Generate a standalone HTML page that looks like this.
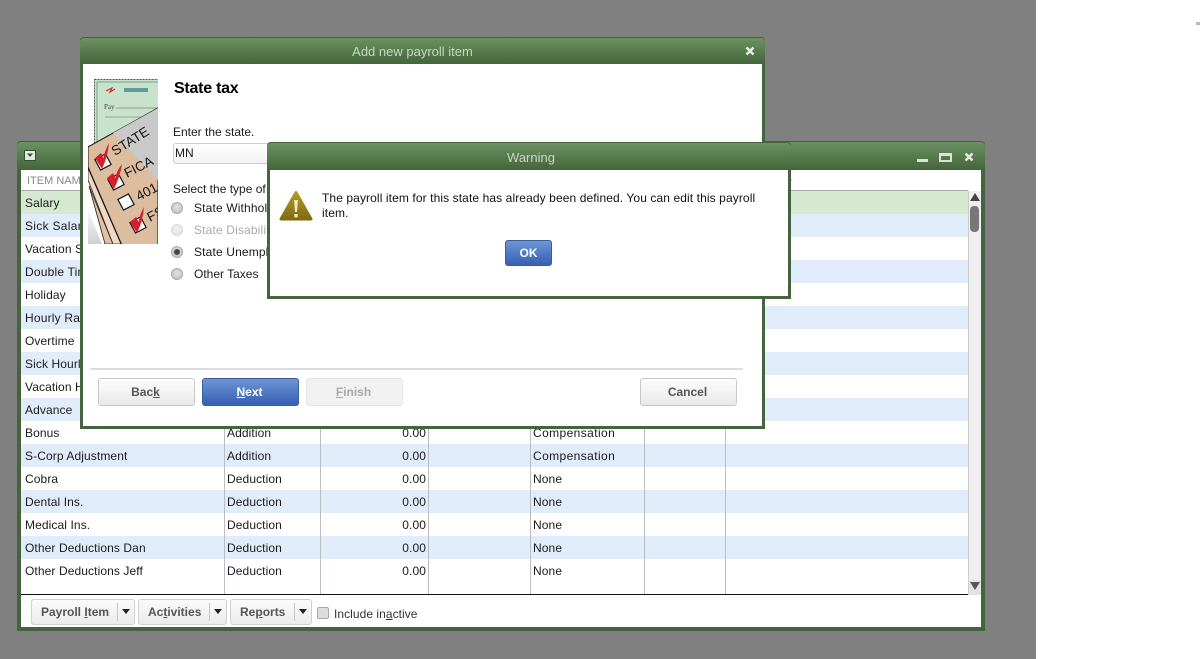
<!DOCTYPE html>
<html><head><meta charset="utf-8">
<style>
html,body{margin:0;padding:0;background:#fff;}
body{width:1202px;height:659px;position:relative;overflow:hidden;font-family:"Liberation Sans",Arial,sans-serif;font-size:12px;color:#1a1a1a;}
.a{position:absolute;}
.t{position:absolute;white-space:nowrap;line-height:14px;}
.win{position:absolute;background:#45633f;border-radius:4px 4px 0 0;box-sizing:border-box;}
.bar{position:absolute;left:0;right:0;top:0;background:linear-gradient(#6d9464,#43653b);border-radius:4px 4px 0 0;box-shadow:inset 0 1px 0 #45633f;}
.in{position:absolute;background:#fff;overflow:hidden;}
.title{position:absolute;color:#c8d5c5;font-size:13px;line-height:15px;white-space:nowrap;text-align:center;}
.row{position:absolute;left:0;width:947px;height:23px;letter-spacing:.1px;}
.row span{position:absolute;top:5px;line-height:14px;white-space:nowrap;}
.row .c{letter-spacing:.4px;}
.row .w{letter-spacing:.3px;}
.row .x{letter-spacing:.2px;}
.b{background:#e1ecfb;} .g{background:#d4e9d0;}
.btn{position:absolute;box-sizing:border-box;border:1px solid #c8c8c8;border-radius:3px;background:linear-gradient(#fdfdfd,#e9e9e9);color:#555;font-weight:bold;text-align:center;height:28px;line-height:26px;text-indent:-2px;}
.blue{border-color:#3a5f95;background:linear-gradient(#6e95d6,#3560b4);color:#fff;}
.dis{background:#f1f1f1;border-color:#e4e4e4;color:#aaa;}
u{text-decoration:underline;}
.radio{position:absolute;width:10px;height:10px;border-radius:50%;border:1px solid #aaa;background:radial-gradient(circle at 50% 40%,#e2e2e2,#bdbdbd);}
.v{position:absolute;top:21px;width:1px;height:403px;background:#b9bec5;}
.fb{position:absolute;top:429px;height:26px;box-sizing:border-box;border:1px solid #d0d0d0;border-radius:3px;background:linear-gradient(#fbfbfb,#ebebeb);color:#555;font-weight:bold;line-height:24px;}
.fb i{position:absolute;top:3px;bottom:3px;width:1px;background:#c8c8c8;}
.fb b{position:absolute;top:9px;width:0;height:0;border-left:4px solid transparent;border-right:4px solid transparent;border-top:5px solid #222;}
</style></head>
<body>
<div class="a" style="left:0;top:0;width:1036px;height:659px;background:#808080;"></div>
<div class="a" style="left:1196px;top:22px;width:4px;height:3px;background:#bbb;"></div>

<!-- back window -->
<div class="win" style="left:17px;top:141px;width:968px;height:490px;">
  <div class="bar" style="height:29px;"></div>
  <svg class="a" style="left:7px;top:9px;" width="13" height="12" viewBox="0 0 13 12"><rect x="0.5" y="0.5" width="11" height="10" fill="#dfe8dc" stroke="#34502f"/><path d="M3 3.500h6L6 7z" fill="#34502f"/></svg>
  <div class="a" style="left:900px;top:18px;width:11px;height:3px;background:#d9e3d6;"></div>
  <div class="a" style="left:922px;top:12px;width:13px;height:9px;box-sizing:border-box;border:2px solid #d9e3d6;border-top-width:3px;"></div>
  <svg class="a" style="left:947px;top:11px;" width="10" height="10" viewBox="0 0 10 10"><path d="M1.500 1.500l7 7M8.500 1.500l-7 7" stroke="#dfe8dc" stroke-width="2.600"/></svg>
  <div class="in" style="left:4px;top:29px;width:960px;height:457px;">
    <div class="t" style="left:6px;top:4px;font-size:11px;color:#888;">ITEM NAME</div>
    <div class="t" style="left:760px;top:4px;font-size:11px;color:#888;">ID</div>
    <div class="a" style="left:0;top:20px;width:947px;height:1px;background:#aaa;"></div>

    <div class="row g" style="top:21px;"><span style="left:4px;">Salary</span></div>
    <div class="row b" style="top:44px;"><span class="w" style="left:4px;">Sick Salary</span></div>
    <div class="row" style="top:67px;"><span style="left:4px;">Vacation Salary</span></div>
    <div class="row b" style="top:90px;"><span class="x" style="left:4px;">Double Time</span></div>
    <div class="row" style="top:113px;"><span style="left:4px;">Holiday</span></div>
    <div class="row b" style="top:136px;"><span class="x" style="left:4px;">Hourly Rate</span></div>
    <div class="row" style="top:159px;"><span style="left:4px;">Overtime</span></div>
    <div class="row b" style="top:182px;"><span style="left:4px;">Sick Hourly</span></div>
    <div class="row" style="top:205px;"><span style="left:4px;">Vacation Hourly</span></div>
    <div class="row b" style="top:228px;"><span style="left:4px;">Advance</span></div>
    <div class="row" style="top:251px;"><span style="left:4px;">Bonus</span><span style="left:206px;">Addition</span><span style="right:542px;">0.00</span><span class="c" style="left:512px;">Compensation</span></div>
    <div class="row b" style="top:274px;"><span style="left:4px;">S-Corp Adjustment</span><span style="left:206px;">Addition</span><span style="right:542px;">0.00</span><span class="c" style="left:512px;">Compensation</span></div>
    <div class="row" style="top:297px;"><span style="left:4px;">Cobra</span><span style="left:206px;">Deduction</span><span style="right:542px;">0.00</span><span style="left:512px;">None</span></div>
    <div class="row b" style="top:320px;"><span style="left:4px;">Dental Ins.</span><span style="left:206px;">Deduction</span><span style="right:542px;">0.00</span><span style="left:512px;">None</span></div>
    <div class="row" style="top:343px;"><span style="left:4px;">Medical Ins.</span><span style="left:206px;">Deduction</span><span style="right:542px;">0.00</span><span style="left:512px;">None</span></div>
    <div class="row b" style="top:366px;"><span style="left:4px;">Other Deductions Dan</span><span style="left:206px;">Deduction</span><span style="right:542px;">0.00</span><span style="left:512px;">None</span></div>
    <div class="row" style="top:389px;"><span style="left:4px;">Other Deductions Jeff</span><span style="left:206px;">Deduction</span><span style="right:542px;">0.00</span><span style="left:512px;">None</span></div>

    <div class="v" style="left:203px;"></div>
    <div class="v" style="left:299px;"></div>
    <div class="v" style="left:407px;"></div>
    <div class="v" style="left:509px;"></div>
    <div class="v" style="left:623px;"></div>
    <div class="v" style="left:704px;"></div>

    <div class="a" style="left:0;top:424px;width:947px;height:1px;background:#111;"></div>

    <!-- scrollbar -->
    <div class="a" style="left:947px;top:21px;width:13px;height:404px;background:#efefef;border-left:1px solid #ccc;box-sizing:border-box;"></div>
    <div class="a" style="left:949px;top:23px;width:0;height:0;border-left:5px solid transparent;border-right:5px solid transparent;border-bottom:8px solid #444;"></div>
    <div class="a" style="left:949px;top:36px;width:9px;height:26px;background:#777;border-radius:4px;"></div>
    <div class="a" style="left:948px;top:410px;width:12px;height:15px;background:#e3e3e3;"></div>
    <div class="a" style="left:949px;top:412px;width:0;height:0;border-left:5px solid transparent;border-right:5px solid transparent;border-top:8px solid #555;"></div>

    <!-- footer -->
    <div class="fb" style="left:10px;width:104px;"><span class="a" style="left:9px;">Payroll <u>I</u>tem</span><i style="left:85px;"></i><b style="left:90px;"></b></div>
    <div class="fb" style="left:117px;width:89px;"><span class="a" style="left:9px;">Ac<u>t</u>ivities</span><i style="left:70px;"></i><b style="left:75px;"></b></div>
    <div class="fb" style="left:209px;width:82px;"><span class="a" style="left:9px;">Re<u>p</u>orts</span><i style="left:63px;"></i><b style="left:68px;"></b></div>
    <div class="a" style="left:296px;top:437px;width:12px;height:12px;box-sizing:border-box;border:1px solid #aaa;border-radius:2px;background:#ddd;"></div>
    <div class="t" style="left:313px;top:437px;color:#333;letter-spacing:.05px;">Include in<u>a</u>ctive</div>
  </div>
</div>

<!-- wizard dialog -->
<div class="win" style="left:80px;top:37px;width:685px;height:392px;">
  <div class="bar" style="height:27px;"></div>
  <div class="title" style="left:0;width:665px;top:7px;">Add new payroll item</div>
  <svg class="a" style="left:665px;top:9px;" width="10" height="10" viewBox="0 0 10 10"><path d="M1.500 1.500l7 7M8.500 1.500l-7 7" stroke="#e6ece4" stroke-width="2.600"/></svg>
  <div class="in" style="left:3px;top:27px;width:679px;height:362px;">
    <!-- image; page coords translated -->
    <svg class="a" style="left:0;top:0;" width="80" height="190" viewBox="83 64 80 190">
      <defs><clipPath id="c"><rect x="88" y="78" width="70" height="166"/></clipPath>
      <linearGradient id="sh" x1="0" y1="0" x2="0" y2="1"><stop offset="0" stop-color="#fafafa"/><stop offset="1" stop-color="#d0d0d0"/></linearGradient></defs>
      <g clip-path="url(#c)">
        <rect x="94.500" y="79.500" width="70" height="70" fill="#c8e2cc" stroke="#44584a" stroke-dasharray="2 1"/>
        <rect x="97" y="82" width="70" height="60" fill="none" stroke="#7aa088" stroke-width="1"/>
        <path d="M106 91l6-3-2 4 5-3" stroke="#c33" fill="none" stroke-width="1.200"/>
        <rect x="124" y="88" width="24" height="4" fill="#5f9c9a"/>
        <text x="104" y="109" font-family="Liberation Serif,serif" font-size="7" fill="#444">Pay</text>
        <path d="M116 108h42" stroke="#999" stroke-width="1"/>
        <path d="M105 117h53" stroke="#8fae96" stroke-width="1"/>
        <path d="M88 210L102 244H88z" fill="url(#sh)"/>
        <path d="M89 186L105 244H113z" fill="#e0bfa5" stroke="#222" stroke-width=".8"/>
        <path d="M88 168V180L113 244H121z" fill="#f0d8c4" stroke="#222" stroke-width=".8"/>
        <path d="M88 147L158 108V250H124L88 167z" fill="#dcbd9f" stroke="#111" stroke-width="1"/>
        <path d="M113 133L158 108V180z" fill="#c9c9c9"/>
        <g font-family="Liberation Sans,Arial,sans-serif" font-size="13.500" fill="#111">
          <text transform="translate(115 156) rotate(-32)">STATE</text>
          <text transform="translate(127 178) rotate(-27)">FICA</text>
          <text transform="translate(139 201) rotate(-28)">401</text>
          <text transform="translate(150 222) rotate(-28)">FSA</text>
        </g>
        <g fill="#fff" stroke="#111" stroke-width="1.200">
          <rect x="-6" y="-6" width="12" height="12" transform="translate(103 162) rotate(-28)"/>
          <rect x="-6" y="-6" width="12" height="12" transform="translate(116 182) rotate(-28)"/>
          <rect x="-6" y="-6" width="12" height="12" transform="translate(126 202) rotate(-28)"/>
          <rect x="-6" y="-6" width="12" height="12" transform="translate(138 225) rotate(-28)"/>
        </g>
        <g fill="#d81e2a">
          <path d="M95 158L101 153L103.500 158Q105 150 109 143Q108 156 102 169z"/>
          <path d="M107 178L113 173L115.500 178Q117 170 122 164Q120 177 114 189z"/>
          <path d="M130 222L136 217L138.500 222Q140 214 144 207Q143 221 137 233z"/>
        </g>
      </g>
    </svg>
    <div class="t" style="left:91px;top:16px;font-size:16px;font-weight:bold;color:#000;line-height:18px;letter-spacing:-.25px;">State tax</div>
    <div class="t" style="left:90px;top:61px;">Enter the state.</div>
    <div class="a" style="left:90px;top:79px;width:200px;height:21px;box-sizing:border-box;border:1px solid #ccc;border-radius:3px;background:linear-gradient(#fff,#f2f2f2);"><span class="t" style="left:1px;top:2px;">MN</span></div>
    <div class="t" style="left:90px;top:118px;">Select the type of state tax</div>
    <div class="radio" style="left:88px;top:138px;"></div>
    <div class="t" style="left:111px;top:137px;letter-spacing:.15px;">State Withholding</div>
    <div class="radio" style="left:88px;top:160px;opacity:.45;"></div>
    <div class="t" style="left:111px;top:159px;color:#aaa;letter-spacing:.15px;">State Disability</div>
    <div class="radio" style="left:88px;top:182px;"></div>
    <div class="a" style="left:91px;top:185px;width:6px;height:6px;border-radius:50%;background:#444;"></div>
    <div class="t" style="left:111px;top:181px;letter-spacing:.15px;">State Unemployment</div>
    <div class="radio" style="left:88px;top:204px;"></div>
    <div class="t" style="left:111px;top:203px;">Other Taxes</div>
    <div class="a" style="left:7px;top:304px;width:653px;height:2px;background:#ddd;"></div>
    <div class="btn" style="left:15px;top:314px;width:97px;">Bac<u>k</u></div>
    <div class="btn blue" style="left:119px;top:314px;width:97px;"><u>N</u>ext</div>
    <div class="btn dis" style="left:223px;top:314px;width:97px;"><u>F</u>inish</div>
    <div class="btn" style="left:557px;top:314px;width:97px;">Cancel</div>
  </div>
</div>

<!-- warning -->
<div class="win" style="left:267px;top:142px;width:524px;height:157px;">
  <div class="bar" style="height:28px;"></div>
  <div class="title" style="left:0;width:528px;top:8px;">Warning</div>
  <div class="in" style="left:3px;top:28px;width:518px;height:126px;">
    <svg class="a" style="left:9px;top:20px;" width="34" height="33" viewBox="0 0 34 33">
      <defs><linearGradient id="w" gradientUnits="userSpaceOnUse" x1="0" y1="1" x2="0" y2="31"><stop offset="0" stop-color="#b39a24"/><stop offset="1" stop-color="#7d6a12"/></linearGradient></defs>
      <path d="M17 2.500L32 29H2z" fill="url(#w)" stroke="url(#w)" stroke-width="3" stroke-linejoin="round"/>
      <path d="M15 10h4l-1 12h-2z" fill="#f0e9c0"/>
      <rect x="15.300" y="24" width="3.400" height="3.400" fill="#f0e9c0"/>
    </svg>
    <div class="a" style="left:52px;top:21px;width:450px;line-height:15px;color:#111;letter-spacing:.1px;">The payroll item for this state has already been defined. You can edit this payroll item.</div>
    <div class="btn blue" style="left:235px;top:70px;width:47px;height:26px;line-height:24px;text-indent:0;">OK</div>
  </div>
</div>
</body></html>
